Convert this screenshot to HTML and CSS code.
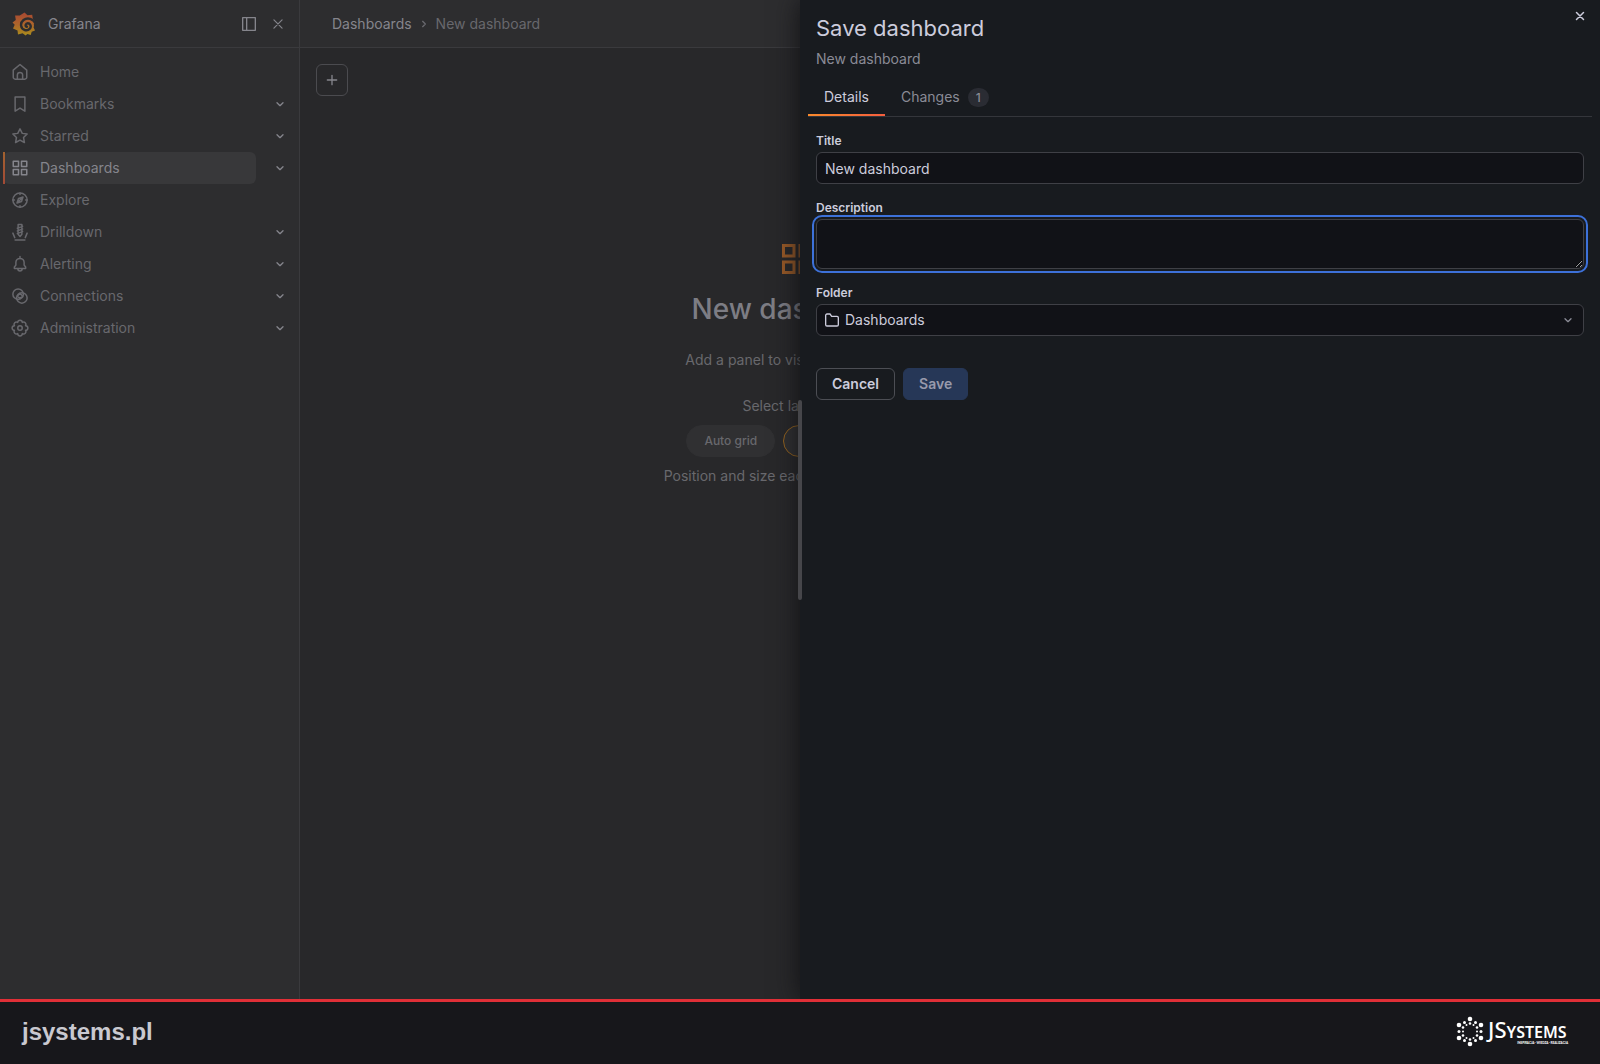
FILE: index.html
```html
<!DOCTYPE html>
<html lang="en">
<head>
    <meta charset="UTF-8">
    <meta name="viewport" content="width=device-width, initial-scale=1.0">
    <title>New dashboard - Dashboards - Grafana</title>
    <link rel="stylesheet" href="styles.css">
</head>
<body>

<!-- Shared icons -->
<svg class="sprite" aria-hidden="true">
    <symbol id="chevron" viewBox="0 0 24 24"><path d="M7.500 10l4.500 4.500 4.500-4.500"/></symbol>
    <symbol id="close" viewBox="0 0 24 24"><path d="M5 5l14 14M19 5L5 19"/></symbol>
    <symbol id="apps" viewBox="0 0 24 24"><path d="M3 3h7v7H3zM14 3h7v7h-7zM3 14h7v7H3zM14 14h7v7h-7z"/></symbol>
</svg>

<div class="app">
    <aside class="sidebar">
        <div class="sidebar-header">
            <svg class="logo" viewBox="0 0 24 24">
                <defs>
                    <linearGradient id="logoFill" x1="0" y1="0" x2="0" y2="1">
                        <stop offset="0" stop-color="#a84832"/>
                        <stop offset="0.500" stop-color="#ad642c"/>
                        <stop offset="1" stop-color="#a88c1c"/>
                    </linearGradient>
                </defs>
                <path fill="url(#logoFill)" d="M12.500.5l3 2.700 4.700-.4.600 3.900c1.500 1.300 2.500 2.900 2.800 4.800l-1.800.5c.3 1.200.2 2.300-.2 3.500l1.400 3-3.300 1.200-1 3.300-3.300-1-1.800 1.500-3-2.300-4.600 1.400-.5-4.200-4.500-1.900 1.700-3.700L.5 10.500l3.300-2.500-.7-4.500 4.700-.1z"/>
                <path fill="none" stroke="#2d2d2f" stroke-width="2.400" stroke-linecap="round" d="M24 12.500C21.500 6.500 15.500 5 11.500 8c-3.800 3-3 8.700 1.300 10 4 1.100 7-2.300 5.500-5.200-1.200-2.100-4-1.900-4.600.1-.3 1.100.4 1.900 1.200 1.800"/>
            </svg>
            <span class="brand">Grafana</span>
            <button class="icon-button" type="button" aria-label="Undock menu">
                <svg class="icon" viewBox="0 0 24 24"><path d="M2.500 2.500h19v19h-19zM8.500 2.500v19"/></svg>
            </button>
            <button class="icon-button" type="button" aria-label="Close menu">
                <svg class="icon small"><use href="#close"/></svg>
            </button>
        </div>
        <nav>
            <ul class="menu">
                <li>
                    <a href="#"><svg class="icon" viewBox="0 0 24 24"><path d="M3 9.500L12 2l9 7.500V19a2.500 2.500 0 0 1-2.500 2.500h-13A2.500 2.500 0 0 1 3 19zM8.500 21.500V16a3.500 3.500 0 0 1 7 0v5.500"/></svg>Home</a>
                </li>
                <li>
                    <a href="#"><svg class="icon" viewBox="0 0 24 24"><path d="M5.500 2.500h13v19l-6.500-4-6.500 4z"/></svg>Bookmarks</a>
                    <button class="toggle" type="button" aria-label="Expand Bookmarks"><svg class="icon"><use href="#chevron"/></svg></button>
                </li>
                <li>
                    <a href="#"><svg class="icon" viewBox="0 0 24 24"><path d="M12 2.500l3 6 6.500.9-4.800 4.600 1.200 6.700L12 17.500l-5.900 3.200 1.200-6.700L2.500 9.400l6.500-.9z"/></svg>Starred</a>
                    <button class="toggle" type="button" aria-label="Expand Starred"><svg class="icon"><use href="#chevron"/></svg></button>
                </li>
                <li>
                    <a class="active" href="#"><svg class="icon"><use href="#apps"/></svg>Dashboards</a>
                    <button class="toggle" type="button" aria-label="Expand Dashboards"><svg class="icon"><use href="#chevron"/></svg></button>
                </li>
                <li>
                    <a href="#"><svg class="icon" viewBox="0 0 24 24"><circle cx="12" cy="12" r="9.500"/><path d="M16 8l-2 6-6 2 2-6zM10 14l4-4M12 2.500v2M12 19.500v2M2.500 12h2M19.500 12h2"/></svg>Explore</a>
                </li>
                <li>
                    <a href="#"><svg class="icon" viewBox="0 0 24 24"><path d="M9.500 2h5v13L12 18l-2.500-3zM8.500 7l7-2.500M8.500 10.500l7-2.500M8.500 14l7-2.500M5.500 22.500h13M5 19.500l-2.500-6M19 19.500l2.500-6"/></svg>Drilldown</a>
                    <button class="toggle" type="button" aria-label="Expand Drilldown"><svg class="icon"><use href="#chevron"/></svg></button>
                </li>
                <li>
                    <a href="#"><svg class="icon" viewBox="0 0 24 24"><path d="M4.500 18v-2l2-2.500V10a5.500 5.500 0 0 1 11 0v3.500l2 2.500v2zM12 4V2M9 18.500c.5 3.700 5.500 3.700 6 0"/></svg>Alerting</a>
                    <button class="toggle" type="button" aria-label="Expand Alerting"><svg class="icon"><use href="#chevron"/></svg></button>
                </li>
                <li>
                    <a href="#"><svg class="icon" viewBox="0 0 24 24"><circle cx="9.500" cy="9.500" r="7"/><circle cx="14.500" cy="14.500" r="7"/><path d="M12 8.500l3.500 3.500-3.500 3.500L8.500 12z"/></svg>Connections</a>
                    <button class="toggle" type="button" aria-label="Expand Connections"><svg class="icon"><use href="#chevron"/></svg></button>
                </li>
                <li>
                    <a href="#"><svg class="icon" viewBox="0 0 24 24"><path d="M19.400 15.100A3.100 3.100 0 0 1 15.100 19.400A3.100 3.100 0 0 1 8.900 19.400A3.100 3.100 0 0 1 4.600 15.100A3.100 3.100 0 0 1 4.600 8.900A3.100 3.100 0 0 1 8.900 4.600A3.100 3.100 0 0 1 15.100 4.600A3.100 3.100 0 0 1 19.400 8.900A3.100 3.100 0 0 1 19.400 15.100z"/><circle cx="12" cy="12" r="3"/></svg>Administration</a>
                    <button class="toggle" type="button" aria-label="Expand Administration"><svg class="icon"><use href="#chevron"/></svg></button>
                </li>
            </ul>
        </nav>
    </aside>

    <div class="content">
        <header class="topbar">
            <a href="#">Dashboards</a>
            <svg class="icon separator" viewBox="0 0 24 24"><path d="M10 8l4 4-4 4"/></svg>
            <span>New dashboard</span>
        </header>
        <main class="canvas">
            <button class="add-button" type="button" aria-label="Add">
                <svg class="icon" viewBox="0 0 24 24"><path d="M12 5v14M5 12h14"/></svg>
            </button>
            <div class="empty">
                <svg class="empty-icon"><use href="#apps"/></svg>
                <h1>New dashboard</h1>
                <p class="hint">Add a panel to visualize your data</p>
                <p class="layout-label">
                    Select layout:
                    <svg class="icon" viewBox="0 0 24 24"><circle cx="12" cy="12" r="9"/><path d="M12 11v5M12 8v0"/></svg>
                </p>
                <div class="pills">
                    <button class="pill" type="button">Auto grid</button>
                    <button class="pill selected" type="button">Custom layout</button>
                </div>
                <p>Position and size each panel individually</p>
            </div>
        </main>
    </div>

    <section class="drawer" role="dialog" aria-labelledby="drawerTitle">
        <div class="resizer"></div>
        <button class="drawer-close" type="button" aria-label="Close">
            <svg class="icon"><use href="#close"/></svg>
        </button>
        <h2 id="drawerTitle">Save dashboard</h2>
        <p class="subtitle">New dashboard</p>
        <div class="tabs" role="tablist">
            <button class="tab active" type="button" role="tab" aria-selected="true">Details</button>
            <button class="tab" type="button" role="tab" aria-selected="false">Changes <span class="count">1</span></button>
        </div>
        <form class="form">
            <div class="field">
                <label for="title">Title</label>
                <input id="title" type="text" value="New dashboard">
            </div>
            <div class="field">
                <label for="description">Description</label>
                <textarea id="description"></textarea>
            </div>
            <div class="field">
                <label for="folder">Folder</label>
                <div class="select">
                    <svg class="icon folder" viewBox="0 0 24 24"><path d="M2.500 5a2 2 0 0 1 2-2H9l2.500 3.500h8a2 2 0 0 1 2 2V19a2 2 0 0 1-2 2h-15a2 2 0 0 1-2-2z"/></svg>
                    <select id="folder">
                        <option>Dashboards</option>
                    </select>
                    <svg class="icon arrow"><use href="#chevron"/></svg>
                </div>
            </div>
            <div class="actions">
                <button class="button" type="button">Cancel</button>
                <button class="button primary" type="submit" disabled>Save</button>
            </div>
        </form>
    </section>
</div>

<footer class="footer">
    <a href="#">jsystems.pl</a>
    <svg class="company" viewBox="0 0 114 32" role="img" aria-label="JSystems">
        <g fill="#fff">
            <circle cx="14" cy="3" r="2.300"/><circle cx="3" cy="9" r="2.300"/><circle cx="25" cy="9" r="2.300"/>
            <circle cx="3" cy="22" r="2.300"/><circle cx="25" cy="22" r="2.300"/><circle cx="14" cy="28" r="2.300"/>
            <circle cx="8.500" cy="6.500" r="1.500"/><circle cx="19.500" cy="6.500" r="1.500"/><circle cx="3" cy="15.500" r="1.500"/>
            <circle cx="25" cy="15.500" r="1.500"/><circle cx="8.500" cy="24.500" r="1.500"/><circle cx="19.500" cy="24.500" r="1.500"/>
            <circle cx="14" cy="7.500" r="1.300"/><circle cx="10.500" cy="9" r="1"/><circle cx="17.500" cy="9" r="1"/>
            <circle cx="7" cy="11.500" r="1.300"/><circle cx="21" cy="11.500" r="1.300"/><circle cx="7" cy="15.500" r="1"/><circle cx="21" cy="15.500" r="1"/>
            <circle cx="7" cy="19.500" r="1.300"/><circle cx="21" cy="19.500" r="1.300"/><circle cx="10.500" cy="22" r="1"/><circle cx="17.500" cy="22" r="1"/><circle cx="14" cy="23.500" r="1.300"/>
            <text class="company-name" x="32" y="22"><tspan class="big">JS</tspan>YSTEMS</text>
            <text class="company-tag" x="112" y="28" text-anchor="end">INSPIRACJA · WIEDZA · REALIZACJA</text>
        </g>
    </svg>
</footer>

</body>
</html>
```
FILE: styles.css
```css
* {
    box-sizing: border-box;
}
body {
    display: flex;
    flex-direction: column;
    min-height: 100vh;
    margin: 0;
    background-color: #28282a;
    color: #68686d;
    font-family: Inter, "Liberation Sans", sans-serif;
    font-size: 14px;
    line-height: 22px;
}
a {
    color: inherit;
    text-decoration: none;
}
button {
    padding: 0;
    border: none;
    background: none;
    color: inherit;
    font: inherit;
    cursor: pointer;
}
h1, h2, p {
    margin: 0;
    font-weight: 400;
}
.sprite {
    position: absolute;
    width: 0;
    height: 0;
}
.icon {
    width: 16px;
    height: 16px;
    flex: none;
    overflow: visible;
    fill: none;
    stroke: currentColor;
    stroke-width: 2;
    stroke-linejoin: round;
    stroke-linecap: round;
}
.app {
    position: relative;
    display: flex;
    flex: 1;
    overflow: hidden;
}

/* Sidebar */
.sidebar {
    width: 300px;
    flex: none;
    border-right: 1px solid #3a3a3d;
    background-color: #2d2d2f;
}
.sidebar-header {
    display: flex;
    align-items: center;
    height: 48px;
    padding: 0 13px 0 12px;
    border-bottom: 1px solid #3a3a3d;
    color: #85858c;
}
.logo {
    width: 24px;
    height: 24px;
}
.brand {
    flex: 1;
    margin-left: 12px;
}
.icon-button {
    display: flex;
    align-items: center;
    justify-content: center;
    width: 16px;
    height: 24px;
    margin-left: 13px;
}
.icon.small {
    width: 14px;
    height: 14px;
}
.menu {
    margin: 0;
    padding: 8px 11px 8px 3px;
    list-style: none;
}
.menu li {
    display: flex;
    align-items: center;
    justify-content: space-between;
}
.menu a {
    position: relative;
    display: flex;
    align-items: center;
    gap: 11px;
    width: 253px;
    height: 32px;
    padding-left: 8px;
    border-radius: 6px;
}
.menu a .icon {
    width: 18px;
    height: 18px;
}
.menu a.active {
    background-color: #38383a;
    color: #85858c;
}
.menu a.active::before {
    content: "";
    position: absolute;
    top: 0;
    bottom: 0;
    left: 0;
    width: 2px;
    background: linear-gradient(#a3622f, #a24a36);
}
.toggle {
    display: flex;
    width: 16px;
    height: 16px;
    color: #85858c;
}

/* Page */
.content {
    display: flex;
    flex: 1;
    flex-direction: column;
}
.topbar {
    display: flex;
    align-items: center;
    gap: 4px;
    height: 48px;
    padding: 0 32px;
    border-bottom: 1px solid #3a3a3d;
    background-color: #2d2d2f;
}
.topbar a {
    color: #85858c;
}
.canvas {
    padding: 16px;
}
.add-button {
    display: flex;
    align-items: center;
    justify-content: center;
    width: 32px;
    height: 32px;
    border: 1px solid #4b4b4f;
    border-radius: 6px;
    color: #85858c;
}
.empty {
    display: flex;
    flex-direction: column;
    align-items: center;
    margin: 145px 306px 0 0;
}
.empty-icon {
    width: 36px;
    height: 36px;
    fill: none;
    stroke: #985a28;
    stroke-width: 2;
}
.empty h1 {
    margin: 16px 0 24px;
    color: #7d7d84;
    font-size: 28px;
    font-weight: 500;
    line-height: 32px;
}
.empty .hint {
    margin-bottom: 24px;
}
.layout-label {
    display: flex;
    align-items: center;
    gap: 4px;
}
.pills {
    display: flex;
    gap: 8px;
    margin: 8px 0;
}
.pill {
    height: 32px;
    padding: 0 17px;
    border: 1px solid #303032;
    border-radius: 16px;
    background-color: #303032;
    font-size: 12px;
    font-weight: 500;
}
.pill.selected {
    padding: 0 20px;
    border-color: #94631f;
}

/* Drawer */
.drawer {
    position: absolute;
    top: 0;
    right: 0;
    bottom: 0;
    width: 50%;
    padding: 16px;
    background-color: #181b1f;
    box-shadow: 0 0 24px #111114;
    color: #ccccdc;
    color-scheme: dark;
}
.resizer {
    position: absolute;
    top: 400px;
    left: -2px;
    width: 4px;
    height: 200px;
    border-radius: 2px;
    background-color: #46464a;
}
.drawer-close {
    position: absolute;
    top: 8px;
    right: 12px;
    display: flex;
    align-items: center;
    justify-content: center;
    width: 16px;
    height: 16px;
}
.drawer-close .icon {
    width: 12px;
    height: 12px;
    stroke-width: 3;
}
.drawer h2 {
    font-size: 22px;
    line-height: 24px;
}
.subtitle {
    margin-top: 8px;
    color: #8a8b96;
}
.tabs {
    display: flex;
    margin: 8px -8px 0;
    border-bottom: 1px solid #34363b;
}
.tab {
    position: relative;
    display: flex;
    align-items: center;
    gap: 8px;
    height: 38px;
    padding: 0 16px;
    color: #8a8b96;
}
.tab.active {
    color: #ccccdc;
}
.tab.active::after {
    content: "";
    position: absolute;
    right: 0;
    bottom: 0;
    left: 0;
    height: 2px;
    background: linear-gradient(90deg, #f98a2c, #f55f3e);
}
.count {
    padding: 0 8px;
    border-radius: 10px;
    background-color: #2a2c33;
    font-size: 12px;
    font-weight: 500;
    line-height: 19px;
}
.form {
    padding-top: 16px;
}
.field {
    margin-bottom: 16px;
}
.field label {
    display: block;
    margin-bottom: 4px;
    font-size: 12px;
    font-weight: 600;
    line-height: 15px;
}
.field input,
.field textarea,
.field select {
    display: block;
    width: 100%;
    height: 32px;
    padding: 0 8px;
    border: 1px solid #3f4046;
    border-radius: 6px;
    background-color: #111217;
    color: #ccccdc;
    font: inherit;
}
.field textarea {
    height: 50px;
    outline: 2px solid #3d71d9;
    outline-offset: 2px;
}
.select {
    position: relative;
}
.field select {
    padding-left: 28px;
    appearance: none;
}
.select .icon {
    position: absolute;
    top: 8px;
}
.select .folder {
    left: 8px;
}
.select .arrow {
    right: 8px;
    color: #8a8b96;
}
.actions {
    display: flex;
    gap: 8px;
    margin-top: 32px;
}
.button {
    height: 32px;
    padding: 0 15px;
    border: 1px solid #4c4e54;
    border-radius: 6px;
    font-weight: 600;
}
.button.primary {
    border-color: #263757;
    background-color: #263757;
    color: #989aac;
}

/* Footer */
.footer {
    display: flex;
    align-items: center;
    justify-content: space-between;
    height: 65px;
    padding: 0 30px 2px 22px;
    border-top: 3px solid #e02f37;
    background-color: #17171b;
    color: #c9c9d0;
    font-family: "Liberation Sans", Arial, sans-serif;
    font-size: 24px;
    font-weight: 700;
}
.company {
    width: 114px;
    height: 32px;
}
.company-name {
    font-family: "Noto Sans", sans-serif;
    font-size: 16px;
    font-weight: 600;
}
.company-name .big {
    font-size: 22px;
    font-weight: 500;
}
.company-tag {
    font-family: Lato, sans-serif;
    font-size: 3px;
    font-weight: 900;
}
```
